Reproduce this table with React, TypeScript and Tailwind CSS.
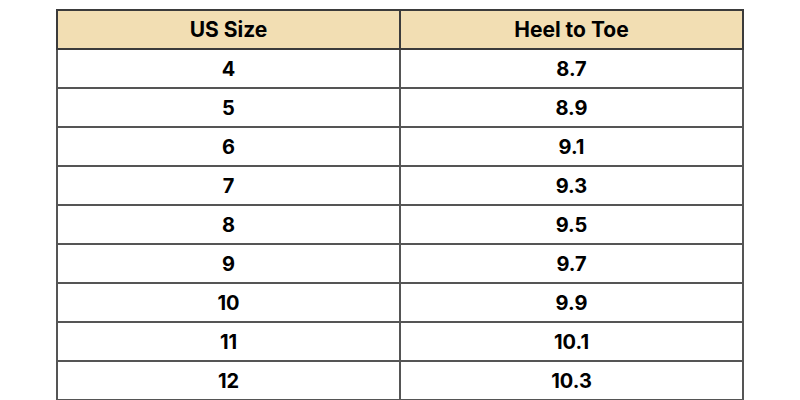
const rows = [
  ['4', '8.7'],
  ['5', '8.9'],
  ['6', '9.1'],
  ['7', '9.3'],
  ['8', '9.5'],
  ['9', '9.7'],
  ['10', '9.9'],
  ['11', '10.1'],
  ['12', '10.3'],
]

export default function App() {
  return (
    <div className="w-[800px] h-[400px] bg-white overflow-hidden pt-[9px] pl-[56px]">
      <table
        className="w-[688px] border-collapse text-[20px] text-black"
        style={{ fontFamily: "'Inter', sans-serif" }}
      >
        <thead>
          <tr className="h-[39px] bg-[#f2deb3] text-[21px]">
            <th className="w-1/2 border-2 border-[#3b3b3b] font-bold">US Size</th>
            <th className="w-1/2 border-2 border-[#3b3b3b] font-bold">Heel to Toe</th>
          </tr>
        </thead>
        <tbody>
          {rows.map(([size, len]) => (
            <tr key={size} className="h-[39px]">
              <td className="border-2 border-[#555] text-center font-bold">{size}</td>
              <td className="border-2 border-[#555] text-center font-bold">{len}</td>
            </tr>
          ))}
        </tbody>
      </table>
    </div>
  )
}
